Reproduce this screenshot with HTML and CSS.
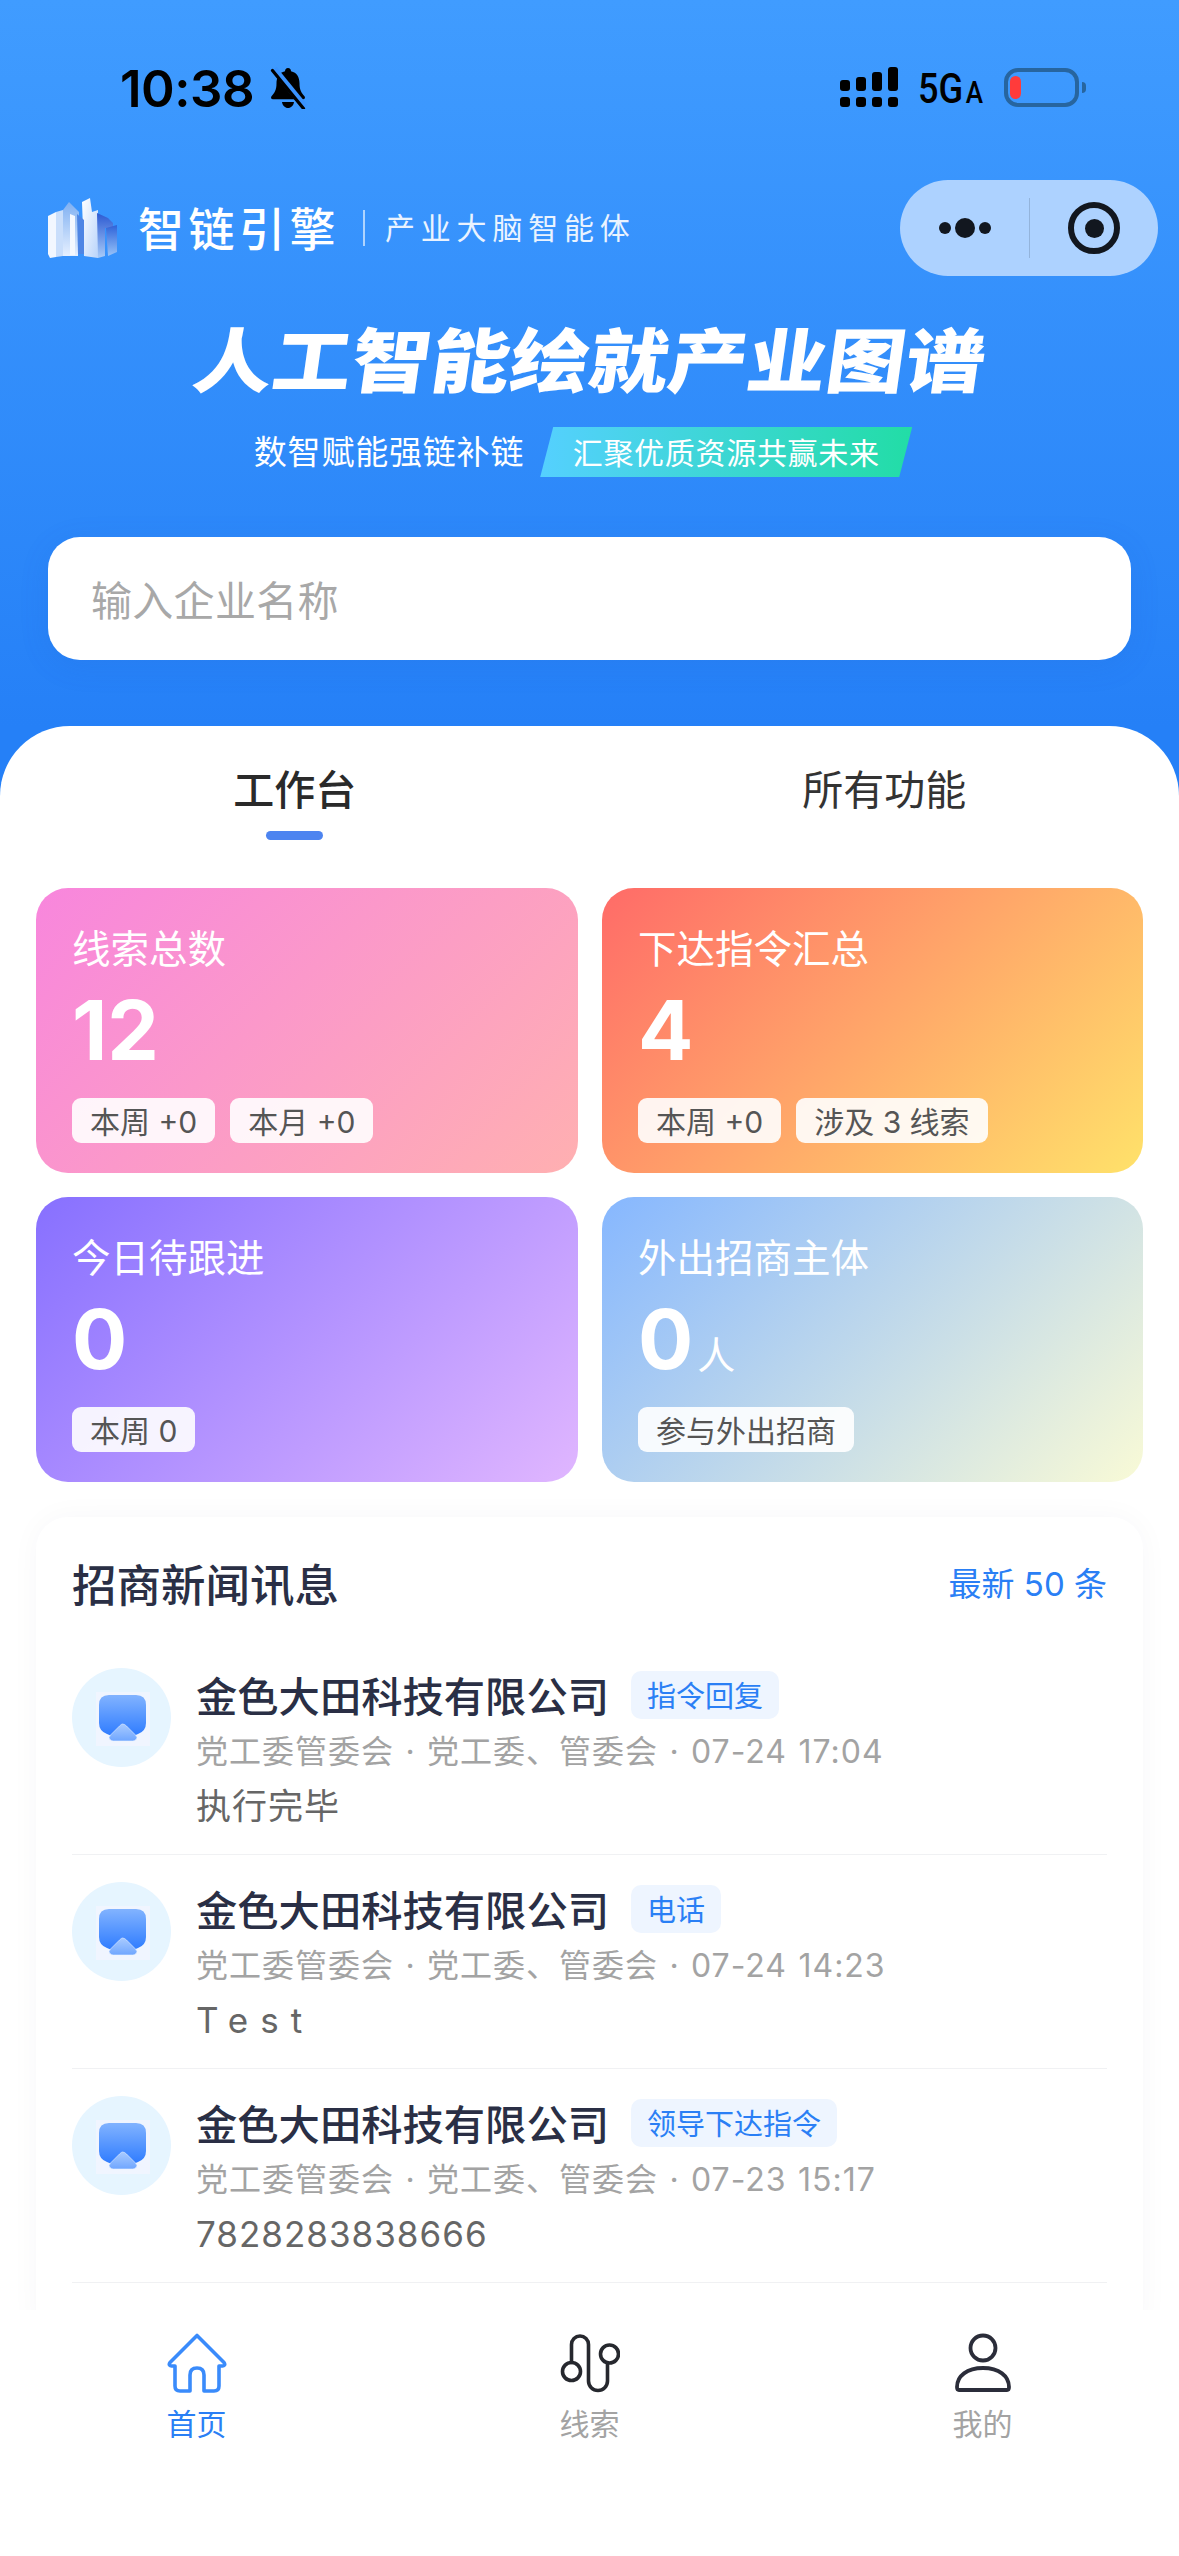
FILE: index.html
```html
<!DOCTYPE html>
<html lang="zh-CN">
<head>
<meta charset="utf-8">
<title>智链引擎</title>
<link rel="stylesheet" href="styles.css">
</head>
<body>
<div class="app">
  <svg class="defs" width="0" height="0" aria-hidden="true">
    <defs>
      <linearGradient id="avatarBody" x1="0" y1="0" x2="0" y2="1"><stop offset="0" stop-color="#82B3FF"/><stop offset="1" stop-color="#2C7AFF"/></linearGradient>
      <linearGradient id="avatarRoof" x1="0" y1="0" x2="0" y2="1"><stop offset="0" stop-color="#A9CBFF"/><stop offset="1" stop-color="#6FA6FF"/></linearGradient>
      <linearGradient id="bldWhite" x1="0" y1="0" x2="1" y2="1"><stop offset="0" stop-color="#FFFFFF"/><stop offset="1" stop-color="#B9D4FB"/></linearGradient>
      <linearGradient id="bldBlue" x1="0" y1="0" x2="0" y2="1"><stop offset="0" stop-color="#2C5AD2"/><stop offset="1" stop-color="#A8CBF8"/></linearGradient>
      <linearGradient id="bldMid" x1="0" y1="0" x2="0" y2="1"><stop offset="0" stop-color="#7FB0F2"/><stop offset="1" stop-color="#E6F0FF"/></linearGradient>
      <symbol id="avatarIcon" viewBox="0 0 54 54">
        <rect width="54" height="54" fill="#F0F5FF"/>
        <path d="M13 3h27q10 0 10 10v18q0 8-8 11l-7 3H18l-7-3q-8-3-8-11V13Q3 3 13 3z" fill="url(#avatarBody)"/>
        <path d="M26.500 32q2 0 4 2l9 9q3 3 0 5-1 1-3 1h-19q-2 0-3-1-3-2 0-5l9-9q2-2 3-2z" fill="url(#avatarRoof)" stroke="#EAF2FF" stroke-width="0.6"/>
      </symbol>
    </defs>
  </svg>

  <header class="status">
    <div class="status-left">
      <span class="time">10:38</span>
      <svg class="bell" width="40" height="42" viewBox="0 0 40 42">
        <path d="M20 1c2 0 3 1.500 3 3.200 6 1.300 8.500 6.300 8.500 12 0 7 2 9.500 5 13 1 1.300.4 3-1.500 3H5c-1.900 0-2.500-1.700-1.500-3 3-3.500 5-6 5-13 0-5.700 2.500-10.700 8.500-12C17 2.500 18 1 20 1z" fill="#000"/>
        <path d="M14 35h12c-.5 3.500-3 6-6 6s-5.500-2.500-6-6z" fill="#000"/>
        <path d="M6 2l31 38" stroke="#3A93FF" stroke-width="6.500"/>
        <path d="M4.500 3.500l31 38" stroke="#000" stroke-width="3.200" stroke-linecap="round"/>
      </svg>
    </div>
    <div class="status-right">
      <svg class="signal" width="58" height="40" viewBox="0 0 58 40">
        <g fill="#000">
          <rect x="0" y="13" width="10" height="11" rx="3"/><rect x="16" y="10" width="10" height="14" rx="3"/><rect x="32" y="5" width="10" height="19" rx="3"/><rect x="48" y="0" width="10" height="24" rx="3"/>
          <rect x="0" y="30" width="10" height="10" rx="3"/><rect x="16" y="30" width="10" height="10" rx="3"/><rect x="32" y="30" width="10" height="10" rx="3"/><rect x="48" y="30" width="10" height="10" rx="3"/>
        </g>
      </svg>
      <span class="net"><span class="net-inner">5G<span class="net-a">A</span></span></span>
      <div class="battery"><span class="battery-fill"></span></div>
      <span class="battery-nub"></span>
    </div>
  </header>

  <nav class="nav">
    <svg class="logo" width="70" height="60" viewBox="0 0 70 60">
      <polygon points="0,18 8,14 8,59 2,60 0,56" fill="#F2F7FF"/>
      <polygon points="8,14 15,12 15,58 8,59" fill="#C9DEFB"/>
      <polygon points="15,12 21,4 31,14 30,58 15,58" fill="url(#bldMid)"/>
      <polygon points="22,16 27,18 27,57 22,57" fill="#F4F8FF"/>
      <polygon points="34,4 42,0 44,14 50,12 50,60 36,58" fill="url(#bldWhite)"/>
      <polygon points="29,16 36,22 36,56 30,56" fill="#4E85E4"/>
      <polygon points="49,15 60,20 65,25 65,30 57,30 57,58 50,60" fill="url(#bldBlue)"/>
      <polygon points="58,30 69,27 69,54 60,58" fill="url(#bldBlue)" opacity="0.85"/>
    </svg>
    <span class="brand">智链引擎</span>
    <span class="brand-sep"></span>
    <span class="brand-sub">产业大脑智能体</span>
    <div class="capsule">
      <div class="capsule-more">
        <span class="dot"></span><span class="dot dot-big"></span><span class="dot"></span>
      </div>
      <span class="capsule-sep"></span>
      <div class="capsule-target"><span class="target-ring"><span class="target-core"></span></span></div>
    </div>
  </nav>

  <h1 class="hero">人工智能绘就产业图谱</h1>
  <div class="slogan">
    <span class="slogan-text">数智赋能强链补链</span>
    <span class="slogan-tag">汇聚优质资源共赢未来</span>
  </div>

  <div class="search">输入企业名称</div>

  <main class="panel">
    <div class="tabs">
      <div class="tab tab-active"><span class="tab-label">工作台</span><span class="tab-bar"></span></div>
      <div class="tab"><span class="tab-label">所有功能</span></div>
    </div>

    <section class="stats">
      <article class="stat stat-pink">
        <div class="stat-title">线索总数</div>
        <div class="stat-num">12</div>
        <div class="stat-tags"><span class="chip">本周 +0</span><span class="chip">本月 +0</span></div>
      </article>
      <article class="stat stat-orange">
        <div class="stat-title">下达指令汇总</div>
        <div class="stat-num">4</div>
        <div class="stat-tags"><span class="chip">本周 +0</span><span class="chip">涉及 3 线索</span></div>
      </article>
      <article class="stat stat-purple">
        <div class="stat-title">今日待跟进</div>
        <div class="stat-num">0</div>
        <div class="stat-tags"><span class="chip">本周 0</span></div>
      </article>
      <article class="stat stat-blue">
        <div class="stat-title">外出招商主体</div>
        <div class="stat-num">0<span class="stat-unit">人</span></div>
        <div class="stat-tags"><span class="chip">参与外出招商</span></div>
      </article>
    </section>

    <section class="news">
      <div class="news-head">
        <span class="news-title">招商新闻讯息</span>
        <span class="news-more">最新 50 条</span>
      </div>
      <div class="item">
        <div class="avatar"><svg width="54" height="54"><use href="#avatarIcon"/></svg></div>
        <div class="item-body">
          <div class="item-top"><span class="item-name">金色大田科技有限公司</span><span class="badge">指令回复</span></div>
          <div class="item-meta">党工委管委会 · 党工委、管委会 · 07-24 17:04</div>
          <div class="item-text">执行完毕</div>
        </div>
      </div>
      <div class="item">
        <div class="avatar"><svg width="54" height="54"><use href="#avatarIcon"/></svg></div>
        <div class="item-body">
          <div class="item-top"><span class="item-name">金色大田科技有限公司</span><span class="badge">电话</span></div>
          <div class="item-meta">党工委管委会 · 党工委、管委会 · 07-24 14:23</div>
          <div class="item-text item-text-wide">Test</div>
        </div>
      </div>
      <div class="item">
        <div class="avatar"><svg width="54" height="54"><use href="#avatarIcon"/></svg></div>
        <div class="item-body">
          <div class="item-top"><span class="item-name">金色大田科技有限公司</span><span class="badge">领导下达指令</span></div>
          <div class="item-meta">党工委管委会 · 党工委、管委会 · 07-23 15:17</div>
          <div class="item-text">7828283838666</div>
        </div>
      </div>
    </section>
  </main>

  <footer class="tabbar">
    <div class="tabbar-item tabbar-on">
      <svg width="60" height="60" viewBox="0 0 60 60" fill="none" stroke="#3A8BFB" stroke-width="3.600" stroke-linejoin="round">
        <path d="M30 2.500 3 29.500q-2 3 1.500 3.500H8v20q0 5 5 5h10V42q0-7 7-7t7 7v16h10q5 0 5-5V33h3.500q3.500-.5 1.500-3.500z"/>
      </svg>
      <span class="tabbar-label">首页</span>
    </div>
    <div class="tabbar-item">
      <svg width="60" height="60" viewBox="0 0 60 60" fill="none" stroke="#26282E" stroke-width="3.600" stroke-linecap="round">
        <circle cx="11.500" cy="38.500" r="9"/>
        <circle cx="49.500" cy="21" r="9"/>
        <path d="M11.500 29.500V11.500a8.500 8.500 0 0 1 17 0V48a9.500 9.500 0 0 0 19 0V30"/>
      </svg>
      <span class="tabbar-label">线索</span>
    </div>
    <div class="tabbar-item">
      <svg width="60" height="60" viewBox="0 0 60 60" fill="none" stroke="#2B2D3A" stroke-width="3.800" stroke-linejoin="round">
        <circle cx="30" cy="15" r="12.500"/>
        <path d="M6 57q-2 0-2-3c0-11 10-19 26-19s26 8 26 19q0 3-2 3z"/>
      </svg>
      <span class="tabbar-label">我的</span>
    </div>
  </footer>
</div>
</body>
</html>
```

FILE: styles.css
```css
* { box-sizing: border-box; }
html, body { margin: 0; padding: 0; }
body {
  width: 1179px;
  height: 2556px;
  overflow: hidden;
  font-family: Inter, "Noto Sans CJK SC", sans-serif;
}
.defs { position: absolute; }
.app {
  position: relative;
  width: 1179px;
  height: 2556px;
  overflow: hidden;
  display: flex;
  flex-direction: column;
  background: linear-gradient(180deg, #409CFF 0, #2580F7 726px, #2580F7 100%);
}

/* status bar */
.status {
  height: 180px;
  flex: none;
  display: flex;
  justify-content: space-between;
  align-items: flex-start;
  padding: 67px 93px 0 120px;
}
.status-left { display: flex; align-items: center; gap: 14px; }
.time {
  font-family: Inter, sans-serif;
  font-size: 51px;
  line-height: 41px;
  font-weight: 600;
  letter-spacing: -0.5px;
  color: #000;
}
.status-right { display: flex; align-items: flex-start; }
.signal { margin-right: 20px; }
.net {
  width: 86px;
  font-family: Roboto, sans-serif;
  font-weight: 500;
  font-size: 43px;
  line-height: 43px;
  color: #000;
  white-space: nowrap;
}
.net-inner {
  display: inline-block;
  transform: scaleX(0.84);
  transform-origin: left center;
}
.net-a { font-size: 31px; margin-left: 3px; }
.battery {
  width: 75px;
  height: 39px;
  margin-top: 1px;
  border: 4px solid #27659F;
  border-radius: 14px;
  padding: 4px 0 4px 2px;
}
.battery-fill {
  display: block;
  width: 11px;
  height: 23px;
  border-radius: 6px;
  background: #FF3B3B;
}
.battery-nub {
  width: 4px;
  height: 11px;
  margin: 15px 0 0 3px;
  border-radius: 0 5px 5px 0;
  background: #27659F;
}

/* mini-program nav */
.nav {
  height: 96px;
  flex: none;
  display: flex;
  align-items: center;
  padding: 0 21px 0 48px;
  color: #fff;
}
.logo { margin-right: 20px; }
.brand {
  font-size: 46px;
  line-height: 60px;
  font-weight: 500;
  letter-spacing: 4.500px;
  white-space: nowrap;
  margin: 2px 23px 0 0;
}
.brand-sep {
  width: 2px;
  height: 36px;
  margin: 0 20px 0 0;
  background: rgba(255, 255, 255, 0.6);
}
.brand-sub {
  font-size: 30px;
  line-height: 44px;
  letter-spacing: 5.800px;
  white-space: nowrap;
  color: #EAF3FF;
}
.capsule {
  margin-left: auto;
  width: 258px;
  height: 96px;
  flex: none;
  display: flex;
  align-items: center;
  border-radius: 48px;
  background: #ADD2FF;
}
.capsule-more {
  width: 129px;
  display: flex;
  align-items: center;
  justify-content: center;
  gap: 4px;
}
.dot { width: 12px; height: 12px; border-radius: 50%; background: #12171F; }
.dot-big { width: 20px; height: 20px; }
.capsule-sep { width: 1px; height: 60px; background: #93B4DC; }
.capsule-target { flex: 1; display: flex; justify-content: center; }
.target-ring {
  width: 52px;
  height: 52px;
  border: 6px solid #12171F;
  border-radius: 50%;
  display: flex;
  align-items: center;
  justify-content: center;
}
.target-core { width: 19px; height: 19px; border-radius: 50%; background: #12171F; }

/* hero */
.hero {
  margin: 46px 0 0;
  flex: none;
  height: 80px;
  text-align: center;
  font-size: 70px;
  line-height: 80px;
  font-weight: 900;
  color: #fff;
  white-space: nowrap;
  transform: skewX(-8deg) scaleX(1.13);
}
.slogan {
  margin-top: 25px;
  height: 50px;
  flex: none;
  display: flex;
  justify-content: center;
  align-items: center;
  gap: 16px;
  padding-right: 13px;
  color: #fff;
}
.slogan-text { font-size: 33px; line-height: 50px; letter-spacing: 0.800px; white-space: nowrap; }
.slogan-tag {
  width: 372px;
  height: 50px;
  padding-bottom: 3px;
  display: flex;
  align-items: center;
  justify-content: center;
  font-size: 30px;
  letter-spacing: 0.700px;
  white-space: nowrap;
  clip-path: polygon(13px 0, 100% 0, calc(100% - 13px) 100%, 0 100%);
  background: linear-gradient(90deg, #55D0FF, #22DDA6);
}

/* search */
.search {
  margin: 60px 48px 0;
  height: 123px;
  flex: none;
  display: flex;
  align-items: center;
  padding: 0 0 2px 43px;
  border-radius: 32px;
  background: #fff;
  box-shadow: 0 6px 30px rgba(30, 90, 200, 0.12);
  font-size: 41px;
  letter-spacing: 0.300px;
  color: #A8A8A8;
}

/* white panel */
.panel {
  margin-top: 66px;
  flex: 1;
  min-height: 0;
  border-radius: 70px 70px 0 0;
  background: #fff;
  padding-top: 36px;
}
.tabs { display: flex; height: 78px; }
.tab {
  width: 589.500px;
  display: flex;
  flex-direction: column;
  align-items: center;
}
.tab-label {
  font-size: 41px;
  line-height: 56px;
  color: #333;
}
.tab-active .tab-label { font-weight: 500; color: #2A2A2A; }
.tab-bar {
  width: 57px;
  height: 9px;
  margin-top: 13px;
  border-radius: 5px;
  background: #4D84F0;
}

/* stat cards */
.stats {
  margin-top: 48px;
  padding: 0 36px;
  display: grid;
  grid-template-columns: 542px 541px;
  grid-auto-rows: 285px;
  gap: 24px;
}
.stat {
  border-radius: 32px;
  padding: 36px 0 0 36px;
  color: #fff;
}
.stat-pink { background: linear-gradient(135deg, #F886DD, #FFB0B1); }
.stat-orange { background: linear-gradient(135deg, #FF6B68, #FFE26A); }
.stat-purple { background: linear-gradient(135deg, #8770FF, #E0B6FF); }
.stat-blue { background: linear-gradient(135deg, #86B7FF, #F9FAD6); }
.stat-title {
  font-size: 38.500px;
  line-height: 50px;
  color: #FFF;
  white-space: nowrap;
}
.stat-num {
  margin-top: 17px;
  height: 79px;
  font-size: 82px;
  line-height: 80px;
  font-weight: 700;
  font-family: Inter, sans-serif;
}
.stat-unit {
  margin-left: 4px;
  font-size: 38px;
  font-weight: 400;
  font-family: "Noto Sans CJK SC", sans-serif;
}
.stat-tags { margin-top: 28px; display: flex; gap: 15px; }
.chip {
  height: 45px;
  padding: 0 18px 2px;
  display: flex;
  align-items: center;
  border-radius: 9px;
  background: rgba(255, 255, 255, 0.9);
  font-size: 30px;
  color: #555;
  white-space: nowrap;
}

/* news */
.news {
  margin: 35px 36px 0;
  padding: 36px 36px 60px;
  border-radius: 32px;
  background: #fff;
  box-shadow: 0 0 30px rgba(40, 60, 90, 0.035);
}
.news-head {
  display: flex;
  justify-content: space-between;
  align-items: center;
  height: 60px;
  padding-bottom: 2px;
}
.news-title { font-size: 44.500px; font-weight: 500; color: #2A2F45; }
.news-more { font-size: 33px; letter-spacing: 0; color: #2A7FF5; }
.item {
  display: flex;
  gap: 25px;
  height: 214px;
  padding-top: 27px;
  border-bottom: 1px solid #F0F1F3;
}
.news-head + .item { margin-top: 28px; padding-top: 27px; }
.avatar {
  width: 99px;
  height: 99px;
  flex: none;
  display: flex;
  align-items: center;
  justify-content: center;
  border-radius: 50%;
  background: #E6F5FF;
}
.avatar svg { display: block; margin: 2px 0 0 3px; }
.item-body { flex: 1; min-width: 0; }
.item-top { display: flex; align-items: center; height: 54px; }
.item-name { font-size: 41.300px; font-weight: 500; color: #2A2F45; white-space: nowrap; margin-bottom: 2px; }
.badge {
  margin-left: 22px;
  height: 48px;
  padding: 0 16px 2px;
  display: flex;
  align-items: center;
  border-radius: 10px;
  background: #EEF5FF;
  font-size: 29px;
  color: #2A7FF5;
  white-space: nowrap;
}
.item-meta {
  margin-top: 8px;
  font-size: 32px;
  line-height: 44px;
  letter-spacing: 1px;
  word-spacing: 1.400px;
  color: #A3A3A3;
  white-space: nowrap;
}
.item-text {
  margin-top: 10px;
  font-size: 35px;
  line-height: 44px;
  letter-spacing: 1px;
  color: #666;
}
.item-text-wide { letter-spacing: 12px; }

/* bottom bar */
.tabbar {
  position: absolute;
  left: 0;
  right: 0;
  bottom: 0;
  height: 246px;
  padding-top: 23px;
  display: flex;
  background: #fff;
}
.tabbar-item {
  width: 393px;
  display: flex;
  flex-direction: column;
  align-items: center;
}
.tabbar-item svg { display: block; }
.tabbar-label {
  margin-top: 11px;
  font-size: 30px;
  line-height: 40px;
  color: #A3A3A3;
}
.tabbar-on .tabbar-label { color: #2A7FF5; }
```
